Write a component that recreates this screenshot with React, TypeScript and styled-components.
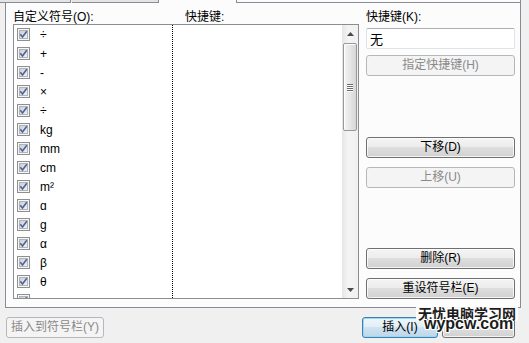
import React from "react";
import styled, { createGlobalStyle } from "styled-components";

const GlobalStyle = createGlobalStyle`
  html, body { margin: 0; padding: 0; background: #f0f0f0; }
  body {
    font-family: "Liberation Sans", "Noto Sans CJK SC", sans-serif;
    font-size: 12px;
    color: #000;
  }
`;

const FONT = `"Liberation Sans", "Noto Sans CJK SC", sans-serif`;
const BORDER = "#898c95";

const Dialog = styled.div`
  position: relative;
  width: 529px;
  height: 343px;
  overflow: hidden;
  background: #f0f0f0;
  display: flex;
  flex-direction: column;
`;

const TabRow = styled.div`
  display: flex;
  height: 3px;
`;

const Tab = styled.div<{ $w: number; $ml?: number; $selected?: boolean }>`
  box-sizing: border-box;
  width: ${(p) => p.$w}px;
  margin-left: ${(p) => p.$ml ?? 0}px;
  height: 3px;
  background: ${(p) => (p.$selected ? "#fcfcfc" : "#e4e4e4")};
  border-right: 1px solid ${BORDER};
  border-bottom: ${(p) => (p.$selected ? "none" : `1px solid ${BORDER}`)};
`;

const TabFill = styled.div`
  box-sizing: border-box;
  width: 284px;
  height: 3px;
  background: #fcfcfc;
  border-bottom: 1px solid ${BORDER};
  border-right: 1px solid ${BORDER};
`;

const Panel = styled.div`
  box-sizing: border-box;
  margin-left: 5px;
  width: 516px;
  height: 305px;
  background: #fcfcfc;
  border: 1px solid ${BORDER};
  border-top: none;
  padding: 7px 5px 8px 7px;
  display: grid;
  grid-template-columns: 346px 149px;
  column-gap: 7px;
`;

const LeftCol = styled.div`
  display: flex;
  flex-direction: column;
`;

const HeaderRow = styled.div`
  display: flex;
  height: 14px;
  line-height: 14px;
`;

const HeaderLabel = styled.span<{ $w?: number }>`
  ${(p) => (p.$w ? `width: ${p.$w}px;` : "")}
  white-space: nowrap;
`;

const ListBox = styled.div`
  box-sizing: border-box;
  height: 275px;
  border: 1px solid #8a8d94;
  background: #fff;
  display: flex;
  overflow: hidden;
`;

const SymbolCol = styled.div`
  box-sizing: border-box;
  width: 159px;
  border-right: 1px dotted #000;
  display: flex;
  flex-direction: column;
  overflow: hidden;
`;

const KeyCol = styled.div`
  flex: 1;
`;

const Row = styled.div`
  flex: 0 0 19px;
  height: 19px;
  display: flex;
  align-items: center;
  padding-left: 3px;
`;

const SymbolText = styled.span`
  margin-left: 10px;
  font-family: ${FONT};
  font-size: 12px;
`;

const ScrollBar = styled.div`
  width: 16px;
  display: flex;
  flex-direction: column;
  background: linear-gradient(to right, #e6e6e6, #f4f4f4 40%, #f0f0f0);
`;

const ArrowBtn = styled.div`
  height: 17px;
  display: flex;
  align-items: center;
  justify-content: center;
`;

const Thumb = styled.div`
  box-sizing: border-box;
  margin: 1px 1px 0 1px;
  height: 88px;
  border: 1px solid #979797;
  border-radius: 2px;
  background: linear-gradient(to right, #f3f3f3, #e6e6e6 50%, #d6d6d6);
  box-shadow: inset 1px 1px 0 #fff;
  display: flex;
  flex-direction: column;
  align-items: center;
  justify-content: center;
  gap: 1px;
`;

const Grip = styled.div`
  width: 6px;
  height: 1px;
  background: #6b6b6b;
  box-shadow: 0 1px 0 #fdfdfd;
`;

const Spacer = styled.div`
  flex: 1;
`;

const RightCol = styled.div`
  display: flex;
  flex-direction: column;
`;

const FieldLabel = styled.div`
  height: 14px;
  line-height: 14px;
  white-space: nowrap;
`;

const TextInput = styled.input`
  box-sizing: border-box;
  margin-top: 4px;
  height: 21px;
  width: 100%;
  border: 1px solid #dfe3e8;
  border-top-color: #abadb3;
  border-radius: 2px;
  background: #fff;
  padding: 0 3px;
  font-family: ${FONT};
  font-size: 13px;
  color: #000;
  outline: none;
`;

const Button = styled.button<{ $mt?: number; $w?: number; $default?: boolean }>`
  box-sizing: border-box;
  margin-top: ${(p) => p.$mt ?? 0}px;
  ${(p) => (p.$w ? `width: ${p.$w}px;` : "width: 100%;")}
  height: 21px;
  padding: 0;
  border: 1px solid ${(p) => (p.$default ? "#3c7fb1" : "#707070")};
  border-radius: 3px;
  background: ${(p) =>
    p.$default
      ? "linear-gradient(#eef6fb 0%, #e1eef7 49%, #cfe3f1 50%, #bcd7ea 100%)"
      : "linear-gradient(#f4f4f4 0%, #ececec 49%, #dedede 50%, #d1d1d1 100%)"};
  box-shadow: inset 0 0 0 1px ${(p) => (p.$default ? "#9fd7f3" : "rgba(255,255,255,0.75)")};
  font-family: ${FONT};
  font-size: 12px;
  line-height: 19px;
  color: #000;
  white-space: nowrap;
  &:disabled {
    border-color: #b5b8bb;
    background: #f4f4f4;
    box-shadow: none;
    color: #8a8a8a;
  }
`;

const BottomRow = styled.div`
  display: flex;
  margin-top: 9px;
  padding: 0 14px 0 6px;
  gap: 4px;
`;

const PushRight = styled.div`
  flex: 1;
`;

const Watermark = styled.div`
  position: absolute;
  left: 416px;
  top: 304px;
  display: flex;
  flex-direction: column;
  align-items: flex-start;
  pointer-events: none;
`;

const WmLine1 = styled.div`
  padding: 2px 2px 0 2px;
  background: rgba(255, 255, 255, 0.92);
  border-radius: 2px;
  font-family: "Noto Sans CJK SC", sans-serif;
  font-weight: 700;
  font-size: 14px;
  line-height: 15px;
  color: #1c1c1c;
  white-space: nowrap;
`;

const WmLine2 = styled.div`
  margin-top: -3px;
  padding-left: 8px;
  font-family: "Liberation Sans", sans-serif;
  font-weight: 700;
  font-size: 16px;
  line-height: 12px;
  color: #1c1c1c;
  white-space: nowrap;
  text-shadow: 1px 0 0 #fff, -1px 0 0 #fff, 0 1px 0 #fff, 0 -1px 0 #fff,
    1px 1px 0 #fff, -1px -1px 0 #fff, 1px -1px 0 #fff, -1px 1px 0 #fff;
`;

const CheckBox: React.FC = () => (
  <svg width="13" height="13" viewBox="0 0 13 13">
    <defs>
      <linearGradient id="cbfill" x1="0" y1="0" x2="1" y2="1">
        <stop offset="0" stopColor="#c9ccd2" />
        <stop offset="1" stopColor="#f3f3f3" />
      </linearGradient>
    </defs>
    <rect x="0.5" y="0.5" width="12" height="12" fill="#f6f6f6" stroke="#8e8f8f" />
    <rect x="2.5" y="2.5" width="8" height="8" fill="url(#cbfill)" stroke="#b0b3b8" />
    <path d="M3.3 6.3 L5.5 9 L9.8 3.2" fill="none" stroke="#4c6298" strokeWidth="1.6" />
  </svg>
);

const Arrow: React.FC<{ up?: boolean }> = ({ up }) => (
  <svg width="7" height="4" viewBox="0 0 7 4">
    <path d={up ? "M0 4 L3.5 0 L7 4 Z" : "M0 0 L3.5 4 L7 0 Z"} fill="#4a4a4a" />
  </svg>
);

const symbols = ["÷", "+", "-", "×", "÷", "kg", "mm", "cm", "m²", "ɑ", "g", "α", "β", "θ", ""];

export default function App() {
  return (
    <Dialog>
      <GlobalStyle />
      <TabRow>
        <Tab $w={71} />
        <Tab $w={87} $ml={1} />
        <Tab $w={78} $selected />
        <TabFill />
      </TabRow>
      <Panel>
        <LeftCol>
          <HeaderRow>
            <HeaderLabel $w={172}>自定义符号(O):</HeaderLabel>
            <HeaderLabel>快捷键:</HeaderLabel>
          </HeaderRow>
          <ListBox>
            <SymbolCol>
              {symbols.map((s, i) => (
                <Row key={i}>
                  <CheckBox />
                  <SymbolText>{s}</SymbolText>
                </Row>
              ))}
            </SymbolCol>
            <KeyCol />
            <ScrollBar>
              <ArrowBtn>
                <Arrow up />
              </ArrowBtn>
              <Thumb>
                <Grip />
                <Grip />
                <Grip />
                <Grip />
              </Thumb>
              <Spacer />
              <ArrowBtn>
                <Arrow />
              </ArrowBtn>
            </ScrollBar>
          </ListBox>
        </LeftCol>
        <RightCol>
          <FieldLabel>快捷键(K):</FieldLabel>
          <TextInput value="无" readOnly />
          <Button $mt={6} disabled>
            指定快捷键(H)
          </Button>
          <Button $mt={61}>下移(D)</Button>
          <Button $mt={9} disabled>
            上移(U)
          </Button>
          <Button $mt={60}>删除(R)</Button>
          <Button $mt={9}>重设符号栏(E)</Button>
        </RightCol>
      </Panel>
      <BottomRow>
        <Button $w={98} disabled>
          插入到符号栏(Y)
        </Button>
        <PushRight />
        <Button $w={76} $default>
          插入(I)
        </Button>
        <Button $w={73} />
      </BottomRow>
      <Watermark>
        <WmLine1>无忧电脑学习网</WmLine1>
        <WmLine2>wypcw.com</WmLine2>
      </Watermark>
    </Dialog>
  );
}
